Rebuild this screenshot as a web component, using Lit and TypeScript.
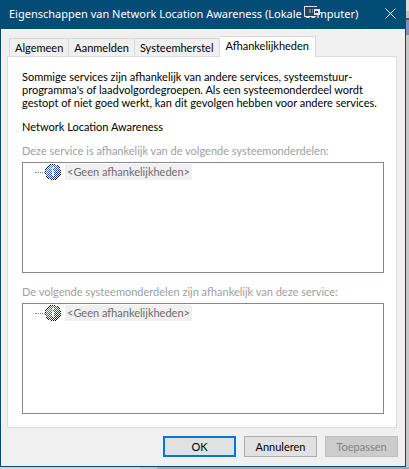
import { LitElement, html, css } from "lit";
import { customElement, property, state } from "lit/decorators.js";

@customElement("service-tree")
class ServiceTree extends LitElement {
  @property() label = "";

  static styles = css`
    :host { display: block; }
    .label { color: #a0a0a0; white-space: nowrap; }
    .tree {
      box-sizing: border-box;
      height: 111px;
      margin: 5px 0 0;
      padding: 1px 0 0 12px;
      border: 1px solid #828790;
      background: #fff;
      list-style: none;
    }
    .node { display: flex; align-items: center; height: 16px; }
    .branch { width: 10px; border-top: 1px dotted #808080; }
    .icon { display: block; width: 16px; height: 16px; }
    .name {
      margin-left: 4px;
      padding: 0 2px;
      background: #f0f0f0;
      color: #6d6d6d;
      line-height: 16px;
      white-space: nowrap;
    }
  `;

  render() {
    return html`
      <div class="label" id="label">${this.label}</div>
      <ul class="tree" role="tree" aria-labelledby="label">
        <li class="node" role="treeitem">
          <span class="branch"></span>
          <svg class="icon" viewBox="0 0 16 16" shape-rendering="crispEdges">
            <defs>
              <linearGradient id="ball" x1="0" y1="0" x2="1" y2="1">
                <stop offset="0" stop-color="#6fa6e4" />
                <stop offset="0.5" stop-color="#2a50cc" />
                <stop offset="1" stop-color="#000080" />
              </linearGradient>
              <pattern id="dither" width="2" height="2" patternUnits="userSpaceOnUse">
                <path d="M0 0h1v1H0zM1 1h1v1H1z" fill="#fff" />
              </pattern>
            </defs>
            <path d="M5 0h6v1h2v1h1v1h1v2h1v6h-1v2h-1v1h-1v1h-2v1H5v-1H3v-1H2v-1H1v-2H0V5h1V3h1V2h1V1h2z" fill="#000" />
            <circle cx="8" cy="8" r="7" fill="url(#ball)" />
            <path d="M7 3h2v2H7zM7 6h2v6H7z" fill="#dfe8f8" />
            <rect width="16" height="16" fill="url(#dither)" />
          </svg>
          <span class="name">&lt;Geen afhankelijkheden&gt;</span>
        </li>
      </ul>
    `;
  }
}

@customElement("app-root")
class AppRoot extends LitElement {
  @state() private active = 3;

  private tabs = ["Algemeen", "Aanmelden", "Systeemherstel", "Afhankelijkheden"];

  static styles = css`
    :host {
      display: block;
      box-sizing: border-box;
      padding: 0 3px 2px 0;
      background:
        linear-gradient(90deg, #d4d4d4 0 140px, #c4c4c4 140px 157px, #a6a6a6 157px) bottom / 100% 2px no-repeat,
        linear-gradient(#dedede 0 11px, #c4c4c4 11px 18px, #555 18px 20px, #8093b5 20px 35px, #c8c8c8 35px);
      font: 11px/13px Lato, sans-serif;
      color: #000;
    }
    .dialog {
      box-sizing: border-box;
      border: 1px solid #034c76;
      border-top: 0;
      background: #f0f0f0;
    }
    .titlebar {
      position: relative;
      box-sizing: border-box;
      display: flex;
      align-items: center;
      justify-content: space-between;
      height: 29px;
      padding: 0 9px 2px 8px;
      background: #034c76;
      color: #fff;
    }
    .title { margin: 0; font: 11px/16px "Noto Sans", sans-serif; white-space: nowrap; }
    .close { display: flex; padding: 0; border: 0; background: none; }
    .close svg { width: 11px; height: 11px; }
    .overlay { position: absolute; left: 303px; top: 6px; width: 16px; height: 12px; }
    .tabs { display: flex; align-items: flex-end; height: 20px; margin: 7px 8px 0; }
    .tab {
      box-sizing: border-box;
      height: 18px;
      padding: 0 5px;
      border: 1px solid #d9d9d9;
      border-width: 1px 1px 0 0;
      background: #f0f0f0;
      color: #000;
      font: inherit;
      white-space: nowrap;
    }
    .tab:first-child { border-left-width: 1px; }
    .tab.active {
      position: relative;
      height: 21px;
      margin-bottom: -1px;
      padding: 0 6px 3px;
      background: #fff;
    }
    .panel {
      box-sizing: border-box;
      margin: 0 8px 0 6px;
      padding: 13px 12px 13px 14px;
      border: 1px solid #dcdcdc;
      background: #fff;
    }
    .text { margin: 0 0 11px; white-space: nowrap; }
    .gap { margin-bottom: 12px; }
    .buttons { display: flex; justify-content: flex-end; gap: 8px; padding: 8px 7px 9px; }
    .button {
      box-sizing: border-box;
      width: 73px;
      height: 21px;
      padding: 0;
      border: 1px solid #adadad;
      background: #e1e1e1;
      color: #000;
      font: inherit;
    }
    .button.default { border: 2px solid #0078d7; }
    .button:disabled { border-color: #bfbfbf; background: #ccc; color: #838383; }
  `;

  render() {
    return html`
      <section class="dialog" role="dialog" aria-labelledby="title">
        <header class="titlebar">
          <h1 class="title" id="title">Eigenschappen van Network Location Awareness (Lokale computer)</h1>
          <button class="close" aria-label="Sluiten">
            <svg viewBox="0 0 11 11"><path d="M.5.5l10 10M10.5.5l-10 10" stroke="#fff" /></svg>
          </button>
          <svg class="overlay" viewBox="0 0 16 12" shape-rendering="crispEdges">
            <path d="M1 1h12v9H1z" fill="#22445c" />
            <path d="M0 0h13v1H1v9h10v1H0zM10 3h6v6h-6z" fill="#e4e4e4" />
            <path d="M5 3h2v4H5zM8 3h1v4H8z" fill="#6b8496" />
            <path d="M11 5h3v2h-3z" fill="#22445c" />
          </svg>
        </header>
        <div class="tabs" role="tablist">
          ${this.tabs.map(
            (tab, i) => html`<button
              class="tab ${i === this.active ? "active" : ""}"
              role="tab"
              aria-selected=${i === this.active}
              @click=${() => (this.active = i)}
            >${tab}</button>`
          )}
        </div>
        <div class="panel" role="tabpanel">
          <p class="text">
            Sommige services zijn afhankelijk van andere services, systeemstuur-<br />
            programma's of laadvolgordegroepen. Als een systeemonderdeel wordt<br />
            gestopt of niet goed werkt, kan dit gevolgen hebben voor andere services.
          </p>
          <p class="text">Network Location Awareness</p>
          <service-tree class="gap" label="Deze service is afhankelijk van de volgende systeemonderdelen:"></service-tree>
          <service-tree label="De volgende systeemonderdelen zijn afhankelijk van deze service:"></service-tree>
        </div>
        <footer class="buttons">
          <button class="button default">OK</button>
          <button class="button">Annuleren</button>
          <button class="button" disabled>Toepassen</button>
        </footer>
      </section>
    `;
  }
}
